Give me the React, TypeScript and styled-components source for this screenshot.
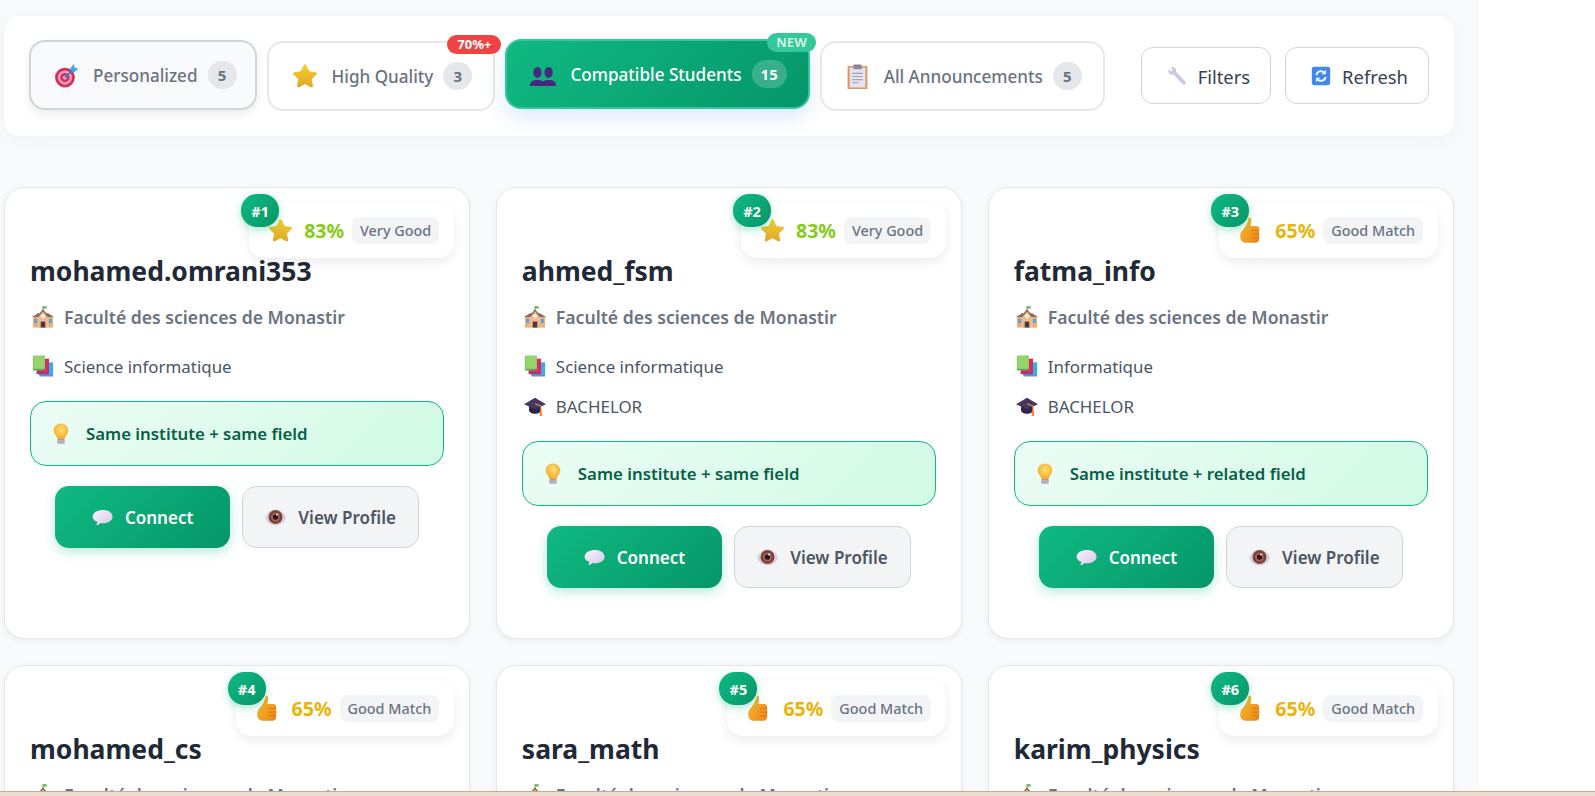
import React from "react";
import styled, { createGlobalStyle } from "styled-components";

const GlobalStyle = createGlobalStyle`
  html, body {
    margin: 0;
    padding: 0;
    height: 796px;
    overflow: hidden;
    background: #ffffff;
  }
  * { box-sizing: border-box; }
  body {
    font-family: "Noto Sans", "Open Sans", "Liberation Sans", sans-serif;
  }
`;

type IconProps = { size?: number };

function TargetIcon({ size = 25 }: IconProps) {
  return (
    <svg width={size} height={size} viewBox="0 0 24 24">
      <circle cx="10.500" cy="14" r="9.500" fill="#d92d5f" />
      <circle cx="10.500" cy="14" r="6.800" fill="#f4a3bd" />
      <circle cx="10.500" cy="14" r="4.400" fill="#d92d5f" />
      <circle cx="10.500" cy="14" r="2" fill="#f4a3bd" />
      <path d="M10.500 14 19 5.500" stroke="#2f7fd0" strokeWidth="1.600" />
      <path d="M15 6 19 1l1 3.500 3.500 1-5 4z" fill="#3aa5ee" />
    </svg>
  );
}

function StarIcon({ size = 26 }: IconProps) {
  return (
    <svg width={size} height={size} viewBox="0 0 24 24">
      <defs>
        <linearGradient id="starFill" x1="0" y1="0" x2="0" y2="1">
          <stop offset="0" stopColor="#f3cf37" />
          <stop offset="1" stopColor="#e0a825" />
        </linearGradient>
      </defs>
      <path
        d="M12 1.200c.6 0 1 .4 1.300 1l2.600 5.500 6 .8c1.100.2 1.500 1.400.7 2.200l-4.400 4.200 1.100 6c.2 1.100-.9 1.900-1.900 1.400L12 19.400l-5.400 2.900c-1 .5-2.100-.3-1.900-1.400l1.100-6-4.400-4.200c-.8-.8-.4-2 .7-2.200l6-.8 2.600-5.500c.3-.6.7-1 1.300-1z"
        fill="url(#starFill)"
      />
    </svg>
  );
}

function PeopleIcon({ size = 26 }: IconProps) {
  return (
    <svg width={size} height={size} viewBox="0 0 24 24">
      <g fill="#46287f">
        <ellipse cx="6.800" cy="10.500" rx="3.800" ry="5" />
        <path d="M0 23c0-2 .6-3.400 2-4.200l2.500-1.300h4.600l2.500 1.300c1.400.8 2 2.200 2 4.200z" />
        <ellipse cx="17.200" cy="10.500" rx="3.800" ry="5" />
        <path d="M10.500 23c0-2 .6-3.400 2-4.200l2.500-1.300h4.600l2.400 1.300c1.400.8 2 2.200 2 4.200z" />
      </g>
    </svg>
  );
}

function ClipboardIcon({ size = 25 }: IconProps) {
  return (
    <svg width={size} height={size} viewBox="0 0 24 24">
      <rect x="2.500" y="2" width="19" height="22" fill="#dc9a5f" />
      <rect x="4.500" y="3.500" width="15" height="19" fill="#e6e2ef" />
      <rect x="8" y="0.500" width="8" height="4.500" rx="1" fill="#8b8794" />
      <path d="M7 9h10M7 12h10M7 15h10M7 18h6" stroke="#a5a1b0" strokeWidth="1" />
    </svg>
  );
}

function WrenchIcon({ size = 20 }: IconProps) {
  return (
    <svg width={size} height={size} viewBox="0 0 24 24">
      <path
        d="M2 3.500 5 6.500 7 5 4.500 1.500c2.500-1 5.500 0 6.300 2.500.3 1 .3 2 0 2.800L22 18.500c1 1 .7 2.200 0 3-.8.8-2 1-3 0L7.700 10.300c-1 .3-2 .3-3 0C2.300 9.500 1 6.200 2 3.500z"
        fill="#cfc6e4"
      />
    </svg>
  );
}

function RefreshIcon({ size = 20 }: IconProps) {
  return (
    <svg width={size} height={size} viewBox="0 0 24 24">
      <rect x="1" y="1" width="22" height="22" rx="2.500" fill="#4288ea" />
      <g fill="none" stroke="#eef4ff" strokeWidth="2.400">
        <path d="M6.500 11a5.500 5.500 0 0 1 9.500-3" />
        <path d="M17.500 13a5.500 5.500 0 0 1-9.500 3" />
      </g>
      <path d="M18 4.500v5.500h-5.500zM6 19.500V14h5.500z" fill="#eef4ff" />
    </svg>
  );
}

function SchoolIcon({ size = 22 }: IconProps) {
  return (
    <svg width={size} height={size} viewBox="0 0 24 24">
      <path d="M12 0v5" stroke="#8a7a70" strokeWidth="1" />
      <path d="M12 .2h4v2.600h-4z" fill="#62b95a" />
      <rect x="1" y="11" width="22" height="12.500" fill="#e9ae79" />
      <path d="M0 12 6.500 8h11L24 12z" fill="#8b6a5a" />
      <path d="M6 12 12 3.500 18 12v11.500H6z" fill="#f0bb8c" />
      <path d="M12 3.500 5 12h2l5-6 5 6h2z" fill="#8b6a5a" />
      <circle cx="12" cy="11" r="2.300" fill="#f3ecf2" />
      <rect x="9.500" y="17" width="5" height="6.500" fill="#4b3a42" />
      <rect x="2.500" y="14" width="3" height="4.500" fill="#49a8e6" />
      <rect x="18.500" y="14" width="3" height="4.500" fill="#49a8e6" />
    </svg>
  );
}

function BooksIcon({ size = 22 }: IconProps) {
  return (
    <svg width={size} height={size} viewBox="0 0 24 24">
      <rect x="8" y="9" width="15" height="14.500" rx="1" fill="#6f88d4" />
      <rect x="9.500" y="8" width="13.500" height="13.500" fill="#35aeea" />
      <rect x="5" y="5" width="13.500" height="16" rx="1" fill="#a13a73" />
      <rect x="6" y="4" width="12.500" height="15" fill="#dd2a63" />
      <rect x="1" y="1" width="13" height="16" rx="1" fill="#62a860" />
      <rect x="1.500" y="0.500" width="12.500" height="14.500" fill="#97d46c" />
    </svg>
  );
}

function GradCapIcon({ size = 22 }: IconProps) {
  return (
    <svg width={size} height={size} viewBox="0 0 24 24">
      <path d="M5.500 11v6c0 2 3 3.500 6.500 3.500s6.500-1.500 6.500-3.500v-6z" fill="#332347" />
      <path d="M12 3 24 10 12 15.500 0 10z" fill="#47365f" />
      <path d="M12 9.500 18.500 12v5" fill="none" stroke="#e9a03a" strokeWidth="1.100" />
      <path d="M17.500 16.500h2l.5 6.500h-3z" fill="#ee8a3a" />
    </svg>
  );
}

function BulbIcon({ size = 22 }: IconProps) {
  return (
    <svg width={size} height={size} viewBox="0 0 24 24">
      <defs>
        <radialGradient id="bulbFill" cx="0.500" cy="0.400" r="0.600">
          <stop offset="0" stopColor="#ffe07a" />
          <stop offset="1" stopColor="#f8a924" />
        </radialGradient>
      </defs>
      <path d="M12 0.500c4.500 0 8 3.300 8 7.500 0 3.800-3.500 6-4 9.500H8c-.5-3.500-4-5.700-4-9.500 0-4.200 3.500-7.500 8-7.500z" fill="url(#bulbFill)" />
      <rect x="8" y="17.500" width="8" height="5" rx="1.500" fill="#a496ad" />
      <path d="M8 19.500h8M8.500 21.500h7" stroke="#d8cfe0" strokeWidth="0.800" />
    </svg>
  );
}

function BubbleIcon({ size = 21 }: IconProps) {
  return (
    <svg width={size} height={size} viewBox="0 0 24 24">
      <defs>
        <linearGradient id="bubbleFill" x1="0" y1="0" x2="1" y2="1">
          <stop offset="0" stopColor="#f6f2f9" />
          <stop offset="1" stopColor="#d9c8ea" />
        </linearGradient>
      </defs>
      <path
        d="M12.500 3.500c6 0 11 3 11 7.500s-5 7.500-11 7.500c-1 0-2 0-2.800-.2-1.200 1.500-3.200 2.400-5.200 2.400 1-1 1.500-2.300 1.500-3.900C2.500 15.600.700 13.500.700 11c0-4.500 5.800-7.500 11.800-7.500z"
        fill="url(#bubbleFill)"
      />
    </svg>
  );
}

function EyeIcon({ size = 21 }: IconProps) {
  return (
    <svg width={size} height={size} viewBox="0 0 24 24">
      <path d="M0 12.500C2 6 7 3 12 3s10 3 12 9.500C22 18.500 17 21 12 21S2 18.500 0 12.500z" fill="#d8d3e3" />
      <circle cx="12" cy="11.500" r="8" fill="#7e4338" />
      <circle cx="12" cy="11.500" r="5" fill="#a8605a" />
      <circle cx="12" cy="11.500" r="3" fill="#2b1420" />
      <circle cx="14" cy="8.500" r="1.200" fill="#ffffff" />
    </svg>
  );
}

function ThumbIcon({ size = 26 }: IconProps) {
  return (
    <svg width={size} height={size} viewBox="0 0 24 24">
      <defs>
        <linearGradient id="thumbFill" x1="0" y1="0" x2="1" y2="1">
          <stop offset="0" stopColor="#fcc02f" />
          <stop offset="1" stopColor="#ea8418" />
        </linearGradient>
      </defs>
      <path
        d="M9.800 .6c1.500-.4 2.500.8 2.400 2.300l-.6 5.300h5.500c1.400 0 2.400 1 2.400 2.400v10c0 1.900-1.400 3.200-3.200 3.200H7.500c-3.600 0-5.500-2.300-5.500-5.800 0-3 1-4.800 3-6.800 2.300-2.300 3.800-5.800 4.800-10.600z"
        fill="url(#thumbFill)"
      />
      <path d="M12.500 12.300h7M12.500 15.800h7.300M12.500 19.300h7" stroke="#d9771a" strokeWidth="0.900" />
    </svg>
  );
}

type TabData = {
  key: string;
  label: string;
  count: number;
  icon: React.ReactNode;
  tone: "hover" | "plain" | "active";
  flag?: string;
};

type CardData = {
  rank: number;
  name: string;
  percent: number;
  quality: string;
  field: string;
  level?: string;
  reason: string;
};

const tabs: TabData[] = [
  { key: "personalized", label: "Personalized", count: 5, icon: <TargetIcon />, tone: "hover" },
  { key: "quality", label: "High Quality", count: 3, icon: <StarIcon />, tone: "plain", flag: "70%+" },
  { key: "students", label: "Compatible Students", count: 15, icon: <PeopleIcon />, tone: "active", flag: "NEW" },
  { key: "all", label: "All Announcements", count: 5, icon: <ClipboardIcon />, tone: "plain" },
];

const cards: CardData[] = [
  { rank: 1, name: "mohamed.omrani353", percent: 83, quality: "Very Good", field: "Science informatique", reason: "Same institute + same field" },
  { rank: 2, name: "ahmed_fsm", percent: 83, quality: "Very Good", field: "Science informatique", level: "BACHELOR", reason: "Same institute + same field" },
  { rank: 3, name: "fatma_info", percent: 65, quality: "Good Match", field: "Informatique", level: "BACHELOR", reason: "Same institute + related field" },
  { rank: 4, name: "mohamed_cs", percent: 65, quality: "Good Match", field: "Informatique", level: "BACHELOR", reason: "Same institute + related field" },
  { rank: 5, name: "sara_math", percent: 65, quality: "Good Match", field: "Informatique", level: "BACHELOR", reason: "Same institute + related field" },
  { rank: 6, name: "karim_physics", percent: 65, quality: "Good Match", field: "Informatique", level: "BACHELOR", reason: "Same institute + related field" },
];

function FilterTab({ tab }: { tab: TabData }) {
  return (
    <Tab $tone={tab.tone}>
      <TabIcon>{tab.icon}</TabIcon>
      <TabLabel>{tab.label}</TabLabel>
      <TabCount $tone={tab.tone}>{tab.count}</TabCount>
      {tab.flag && <TabFlag $tone={tab.tone}>{tab.flag}</TabFlag>}
    </Tab>
  );
}

function StudentCard({ card }: { card: CardData }) {
  const good = card.percent >= 80;
  return (
    <Card>
      <MatchBadge>
        <RankBubble>#{card.rank}</RankBubble>
        {good ? <StarIcon size={25} /> : <ThumbIcon />}
        <Percent $good={good}>{card.percent}%</Percent>
        <Quality>{card.quality}</Quality>
      </MatchBadge>
      <Name>{card.name}</Name>
      <Institute>
        <RowIcon><SchoolIcon /></RowIcon>
        Faculté des sciences de Monastir
      </Institute>
      <Details>
        <Detail>
          <RowIcon><BooksIcon /></RowIcon>
          {card.field}
        </Detail>
        {card.level && (
          <Detail>
            <RowIcon><GradCapIcon /></RowIcon>
            {card.level}
          </Detail>
        )}
      </Details>
      <Reason>
        <ReasonIcon><BulbIcon /></ReasonIcon>
        {card.reason}
      </Reason>
      <Actions>
        <ConnectButton>
          <BubbleIcon />
          Connect
        </ConnectButton>
        <ProfileButton>
          <EyeIcon />
          View Profile
        </ProfileButton>
      </Actions>
    </Card>
  );
}

export default function App() {
  return (
    <>
      <GlobalStyle />
      <Shell>
        <Main>
          <Toolbar>
            <TabGroup>
              {tabs.map((tab) => (
                <FilterTab key={tab.key} tab={tab} />
              ))}
            </TabGroup>
            <ToolButtons>
              <ToolButton>
                <WrenchIcon />
                Filters
              </ToolButton>
              <ToolButton>
                <RefreshIcon />
                Refresh
              </ToolButton>
            </ToolButtons>
          </Toolbar>
          <CardGrid>
            {cards.map((card) => (
              <StudentCard key={card.rank} card={card} />
            ))}
          </CardGrid>
        </Main>
        <BottomStrip />
      </Shell>
    </>
  );
}

const Shell = styled.div`
  display: grid;
  grid-template-rows: 791px 5px;
  width: 1595px;
  height: 796px;
  overflow: hidden;
`;

const Main = styled.main`
  width: 1479px;
  padding: 16px 25px 0 4px;
  background: #f9fafb;
  overflow: hidden;
`;

const BottomStrip = styled.div`
  background: #ecdccd;
  border-top: 1px solid #bfae9f;
`;

const Toolbar = styled.section`
  display: flex;
  align-items: center;
  justify-content: space-between;
  height: 120px;
  padding: 0 25px;
  background: #ffffff;
  border-radius: 16px;
  box-shadow: 0 4px 20px rgba(0, 0, 0, 0.04);
`;

const TabGroup = styled.div`
  display: flex;
  align-items: center;
  gap: 10px;
`;

const Tab = styled.button<{ $tone: TabData["tone"] }>`
  position: relative;
  display: flex;
  align-items: center;
  height: 70px;
  padding: 0 ${(p) => (p.$tone === "hover" ? "18px" : "21px")} 0 23px;
  font: inherit;
  font-size: 17.100px;
  font-weight: 500;
  color: ${(p) => (p.$tone === "active" ? "#ffffff" : "#6b7280")};
  background: ${(p) =>
    p.$tone === "active"
      ? "linear-gradient(135deg, #10b981, #059669)"
      : p.$tone === "hover"
        ? "#f9fafb"
        : "#ffffff"};
  border: 2px solid
    ${(p) =>
      p.$tone === "active"
        ? "#34c79a"
        : p.$tone === "hover"
          ? "#d1d5db"
          : "#e5e7eb"};
  border-radius: 16px;
  box-shadow: ${(p) =>
    p.$tone === "active"
      ? "0 8px 20px rgba(59, 130, 246, 0.18)"
      : p.$tone === "hover"
        ? "0 4px 10px rgba(0, 0, 0, 0.08)"
        : "none"};
  transform: translateY(${(p) => (p.$tone === "active" ? "-2px" : p.$tone === "hover" ? "-1px" : "0")});
`;

const TabIcon = styled.span`
  display: flex;
  margin-right: 14px;
`;

const TabLabel = styled.span`
  white-space: nowrap;
`;

const TabCount = styled.span<{ $tone: TabData["tone"] }>`
  display: flex;
  align-items: center;
  justify-content: center;
  min-width: 29px;
  height: 28px;
  margin-left: 10px;
  padding: 0 9px;
  font-size: 15px;
  font-weight: 700;
  color: ${(p) => (p.$tone === "active" ? "#ffffff" : "#6b7280")};
  background: ${(p) => (p.$tone === "active" ? "rgba(255, 255, 255, 0.2)" : "#e5e7eb")};
  border-radius: 14px;
`;

const TabFlag = styled.span<{ $tone: TabData["tone"] }>`
  position: absolute;
  top: -8px;
  right: -8px;
  height: 19px;
  padding: 0 ${(p) => (p.$tone === "active" ? "9px" : "10px")};
  font-size: 13px;
  font-weight: 700;
  line-height: 19px;
  color: ${(p) => (p.$tone === "active" ? "rgba(255, 255, 255, 0.75)" : "#ffffff")};
  background: ${(p) => (p.$tone === "active" ? "#34c79a" : "#ef4444")};
  border-radius: 10px;
`;

const ToolButtons = styled.div`
  display: flex;
  gap: 14px;
  margin-bottom: 2px;
`;

const ToolButton = styled.button`
  display: flex;
  align-items: center;
  gap: 11px;
  height: 57px;
  padding: 2px 20px 0 25px;
  font: inherit;
  font-size: 18.400px;
  color: #374151;
  background: #ffffff;
  border: 1px solid #d1d5db;
  border-radius: 12px;
`;

const CardGrid = styled.div`
  display: grid;
  grid-template-columns: repeat(3, 1fr);
  grid-auto-rows: 452px;
  gap: 26px 25.600px;
  margin-top: 51px;
`;

const Card = styled.article`
  position: relative;
  padding: 65px 25px 0;
  background: #ffffff;
  border: 1px solid #e5e7eb;
  border-radius: 20px;
  box-shadow: 0 2px 6px rgba(0, 0, 0, 0.06);
`;

const MatchBadge = styled.div`
  position: absolute;
  top: 14px;
  right: 15px;
  display: flex;
  align-items: center;
  height: 56px;
  padding: 0 15px 0 19px;
  background: #ffffff;
  border-radius: 16px;
  box-shadow: 0 4px 12px rgba(0, 0, 0, 0.08);
`;

const RankBubble = styled.span`
  position: absolute;
  top: -8px;
  left: -8px;
  display: flex;
  align-items: center;
  justify-content: center;
  width: 38px;
  height: 33px;
  font-size: 14.500px;
  font-weight: 700;
  color: #ffffff;
  background: linear-gradient(135deg, #10b981, #059669);
  border-radius: 16px;
  box-shadow: 0 3px 9px rgba(16, 185, 129, 0.35);
`;

const Percent = styled.span<{ $good: boolean }>`
  margin: 0 8px 0 11px;
  font-size: 19.500px;
  font-weight: 700;
  color: ${(p) => (p.$good ? "#84cc16" : "#eab308")};
`;

const Quality = styled.span`
  display: flex;
  align-items: center;
  height: 27px;
  padding: 0 8px;
  font-size: 14.400px;
  font-weight: 500;
  color: #6b7280;
  background: #f3f4f6;
  border-radius: 8px;
`;

const Name = styled.h3`
  margin: 0;
  font-size: 26.500px;
  font-weight: 700;
  line-height: 36px;
  color: #1f2937;
`;

const Institute = styled.div`
  display: flex;
  align-items: center;
  height: 26px;
  margin-top: 15px;
  font-size: 17.600px;
  font-weight: 600;
  color: #6b7280;
`;

const RowIcon = styled.span`
  display: flex;
  justify-content: center;
  width: 24px;
  margin-right: 10px;
  padding-left: 2px;
`;

const Details = styled.div`
  display: flex;
  flex-direction: column;
  gap: 16px;
  margin-top: 24px;
`;

const Detail = styled.div`
  display: flex;
  align-items: center;
  height: 24px;
  font-size: 16.900px;
  color: #4b5563;
`;

const Reason = styled.div`
  display: flex;
  align-items: center;
  height: 65px;
  margin-top: 23px;
  padding: 0 19px;
  font-size: 16.800px;
  font-weight: 600;
  color: #065f46;
  background: linear-gradient(135deg, #ecfdf5, #d1fae5);
  border: 1px solid #10b981;
  border-radius: 16px;
`;

const ReasonIcon = styled.span`
  display: flex;
  margin-right: 14px;
`;

const Actions = styled.div`
  display: flex;
  justify-content: center;
  gap: 12px;
  margin-top: 20px;
`;

const ActionButton = styled.button`
  display: flex;
  align-items: center;
  justify-content: center;
  gap: 12px;
  height: 62px;
  font: inherit;
  font-size: 17px;
  font-weight: 600;
  border-radius: 14px;
`;

const ConnectButton = styled(ActionButton)`
  width: 175px;
  color: #ffffff;
  background: linear-gradient(135deg, #10b981, #059669);
  border: none;
  box-shadow: 0 4px 12px rgba(16, 185, 129, 0.3);
`;

const ProfileButton = styled(ActionButton)`
  width: 177px;
  color: #4b5563;
  background: #f3f4f6;
  border: 1px solid #d1d5db;
`;
